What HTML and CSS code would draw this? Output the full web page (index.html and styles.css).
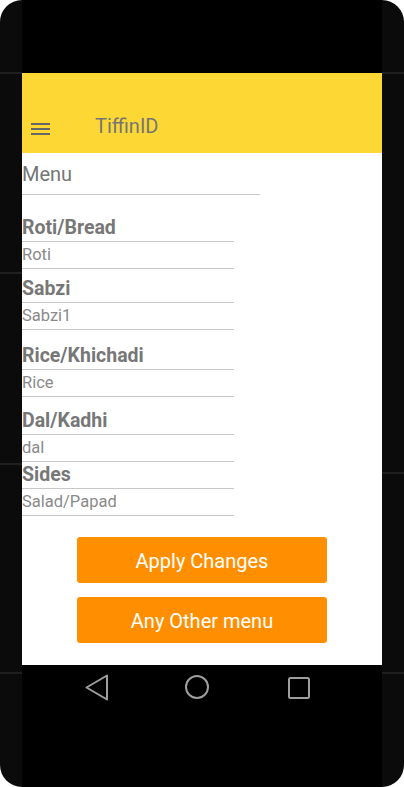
FILE: index.html
```html
<!DOCTYPE html>
<html>
<head>
<meta charset="utf-8">
<link rel="stylesheet" href="styles.css">
</head>
<body>
<div class="phone">
  <span class="bezel-line l1"></span>
  <span class="bezel-line l2"></span>
  <span class="bezel-line l3"></span>
  <span class="bezel-line l4"></span>
  <span class="bezel-line r1"></span>
  <span class="bezel-line r2"></span>
  <span class="bezel-line r3"></span>
  <div class="screen">
    <div class="statusbar"></div>
    <div class="toolbar">
      <svg class="hamburger" width="19" height="12" viewBox="0 0 19 12">
        <rect x="0" y="0" width="19" height="2" fill="#666"/>
        <rect x="0" y="5" width="19" height="2" fill="#666"/>
        <rect x="0" y="10" width="19" height="2" fill="#666"/>
      </svg>
      <div class="title">TiffinID</div>
    </div>
    <div class="content">
      <div class="menu-title">Menu</div>
      <div class="field">
        <div class="label m20">Roti/Bread</div>
        <div class="value">Roti</div>
      </div>
      <div class="field">
        <div class="label m7">Sabzi</div>
        <div class="value">Sabzi1</div>
      </div>
      <div class="field">
        <div class="label m13">Rice/Khichadi</div>
        <div class="value">Rice</div>
      </div>
      <div class="field">
        <div class="label m11">Dal/Kadhi</div>
        <div class="value">dal</div>
      </div>
      <div class="field">
        <div class="label">Sides</div>
        <div class="value">Salad/Papad</div>
      </div>
      <div class="buttons">
        <div class="btn">Apply Changes</div>
        <div class="btn">Any Other menu</div>
      </div>
    </div>
    <div class="navbar">
      <svg class="nav-back" width="24" height="28" viewBox="0 0 24 28">
        <polygon points="22,1.5 1.5,13.5 22,25.5" fill="none" stroke="#9e9e9e" stroke-width="2" stroke-linejoin="round"/>
      </svg>
      <svg class="nav-home" width="26" height="26" viewBox="0 0 26 26">
        <circle cx="13" cy="13" r="11" fill="none" stroke="#9e9e9e" stroke-width="2"/>
      </svg>
      <svg class="nav-recent" width="22" height="22" viewBox="0 0 22 22">
        <rect x="1" y="1" width="20" height="20" rx="1.5" fill="none" stroke="#9e9e9e" stroke-width="2"/>
      </svg>
    </div>
  </div>
</div>
</body>
</html>
```

FILE: styles.css
```css
html, body {
  margin: 0;
  padding: 0;
  background: #ffffff;
}

body {
  font-family: Roboto, "Noto Sans", "Liberation Sans", sans-serif;
}

.phone {
  position: relative;
  width: 404px;
  height: 787px;
  box-sizing: border-box;
  padding: 0 22px;
  background: #0b0b0b;
  border-radius: 22px;
  display: flex;
  overflow: hidden;
}

.bezel-line {
  position: absolute;
  width: 22px;
  height: 2px;
  background: #1f1f1f;
}
.l1, .l2, .l3, .l4 { left: 0; }
.r1, .r2, .r3 { right: 0; }
.l1, .r1 { top: 72px; }
.l2 { top: 272px; }
.l3 { top: 463px; }
.r2 { top: 472px; }
.l4, .r3 { top: 672px; }

.screen {
  width: 360px;
  height: 787px;
  display: flex;
  flex-direction: column;
}

.statusbar {
  height: 73px;
  background: #000;
}

.toolbar {
  height: 80px;
  box-sizing: border-box;
  background: #fdd835;
  display: flex;
  align-items: flex-start;
  padding-top: 41px;
}

.hamburger {
  display: block;
  margin-left: 9px;
  margin-top: 9px;
}

.title {
  margin-left: 45px;
  font-size: 20px;
  line-height: 24px;
  color: #757575;
}

.content {
  flex: 1;
  background: #fff;
  display: flex;
  flex-direction: column;
}

.menu-title {
  width: 238px;
  box-sizing: border-box;
  padding-top: 7px;
  padding-bottom: 6px;
  font-size: 20px;
  line-height: 28px;
  color: #757575;
  border-bottom: 1px solid #c8c8c8;
}

.field {
  width: 212px;
  display: flex;
  flex-direction: column;
}

.label {
  font-size: 19.5px;
  font-weight: bold;
  line-height: 26px;
  color: #777777;
  border-bottom: 1px solid #c8c8c8;
}
.m20 { margin-top: 20px; }
.m7 { margin-top: 7px; }
.m13 { margin-top: 13px; }
.m11 { margin-top: 11px; }

.value {
  font-size: 16.5px;
  line-height: 26px;
  color: #8a8a8a;
  border-bottom: 1px solid #c8c8c8;
}

.buttons {
  margin-top: 21px;
  display: flex;
  flex-direction: column;
  align-items: center;
  gap: 14px;
}

.btn {
  width: 250px;
  height: 46px;
  box-sizing: border-box;
  padding-top: 2px;
  background: #ff8f00;
  border-radius: 3px;
  color: #fff;
  font-size: 20px;
  line-height: 44px;
  text-align: center;
}

.navbar {
  height: 122px;
  box-sizing: border-box;
  background: #000;
  display: flex;
  align-items: flex-start;
  padding-top: 9px;
  padding-left: 63px;
}

.navbar svg { display: block; }

.nav-home {
  margin-left: 75px;
}

.nav-recent {
  margin-left: 78px;
  margin-top: 3px;
}
```
